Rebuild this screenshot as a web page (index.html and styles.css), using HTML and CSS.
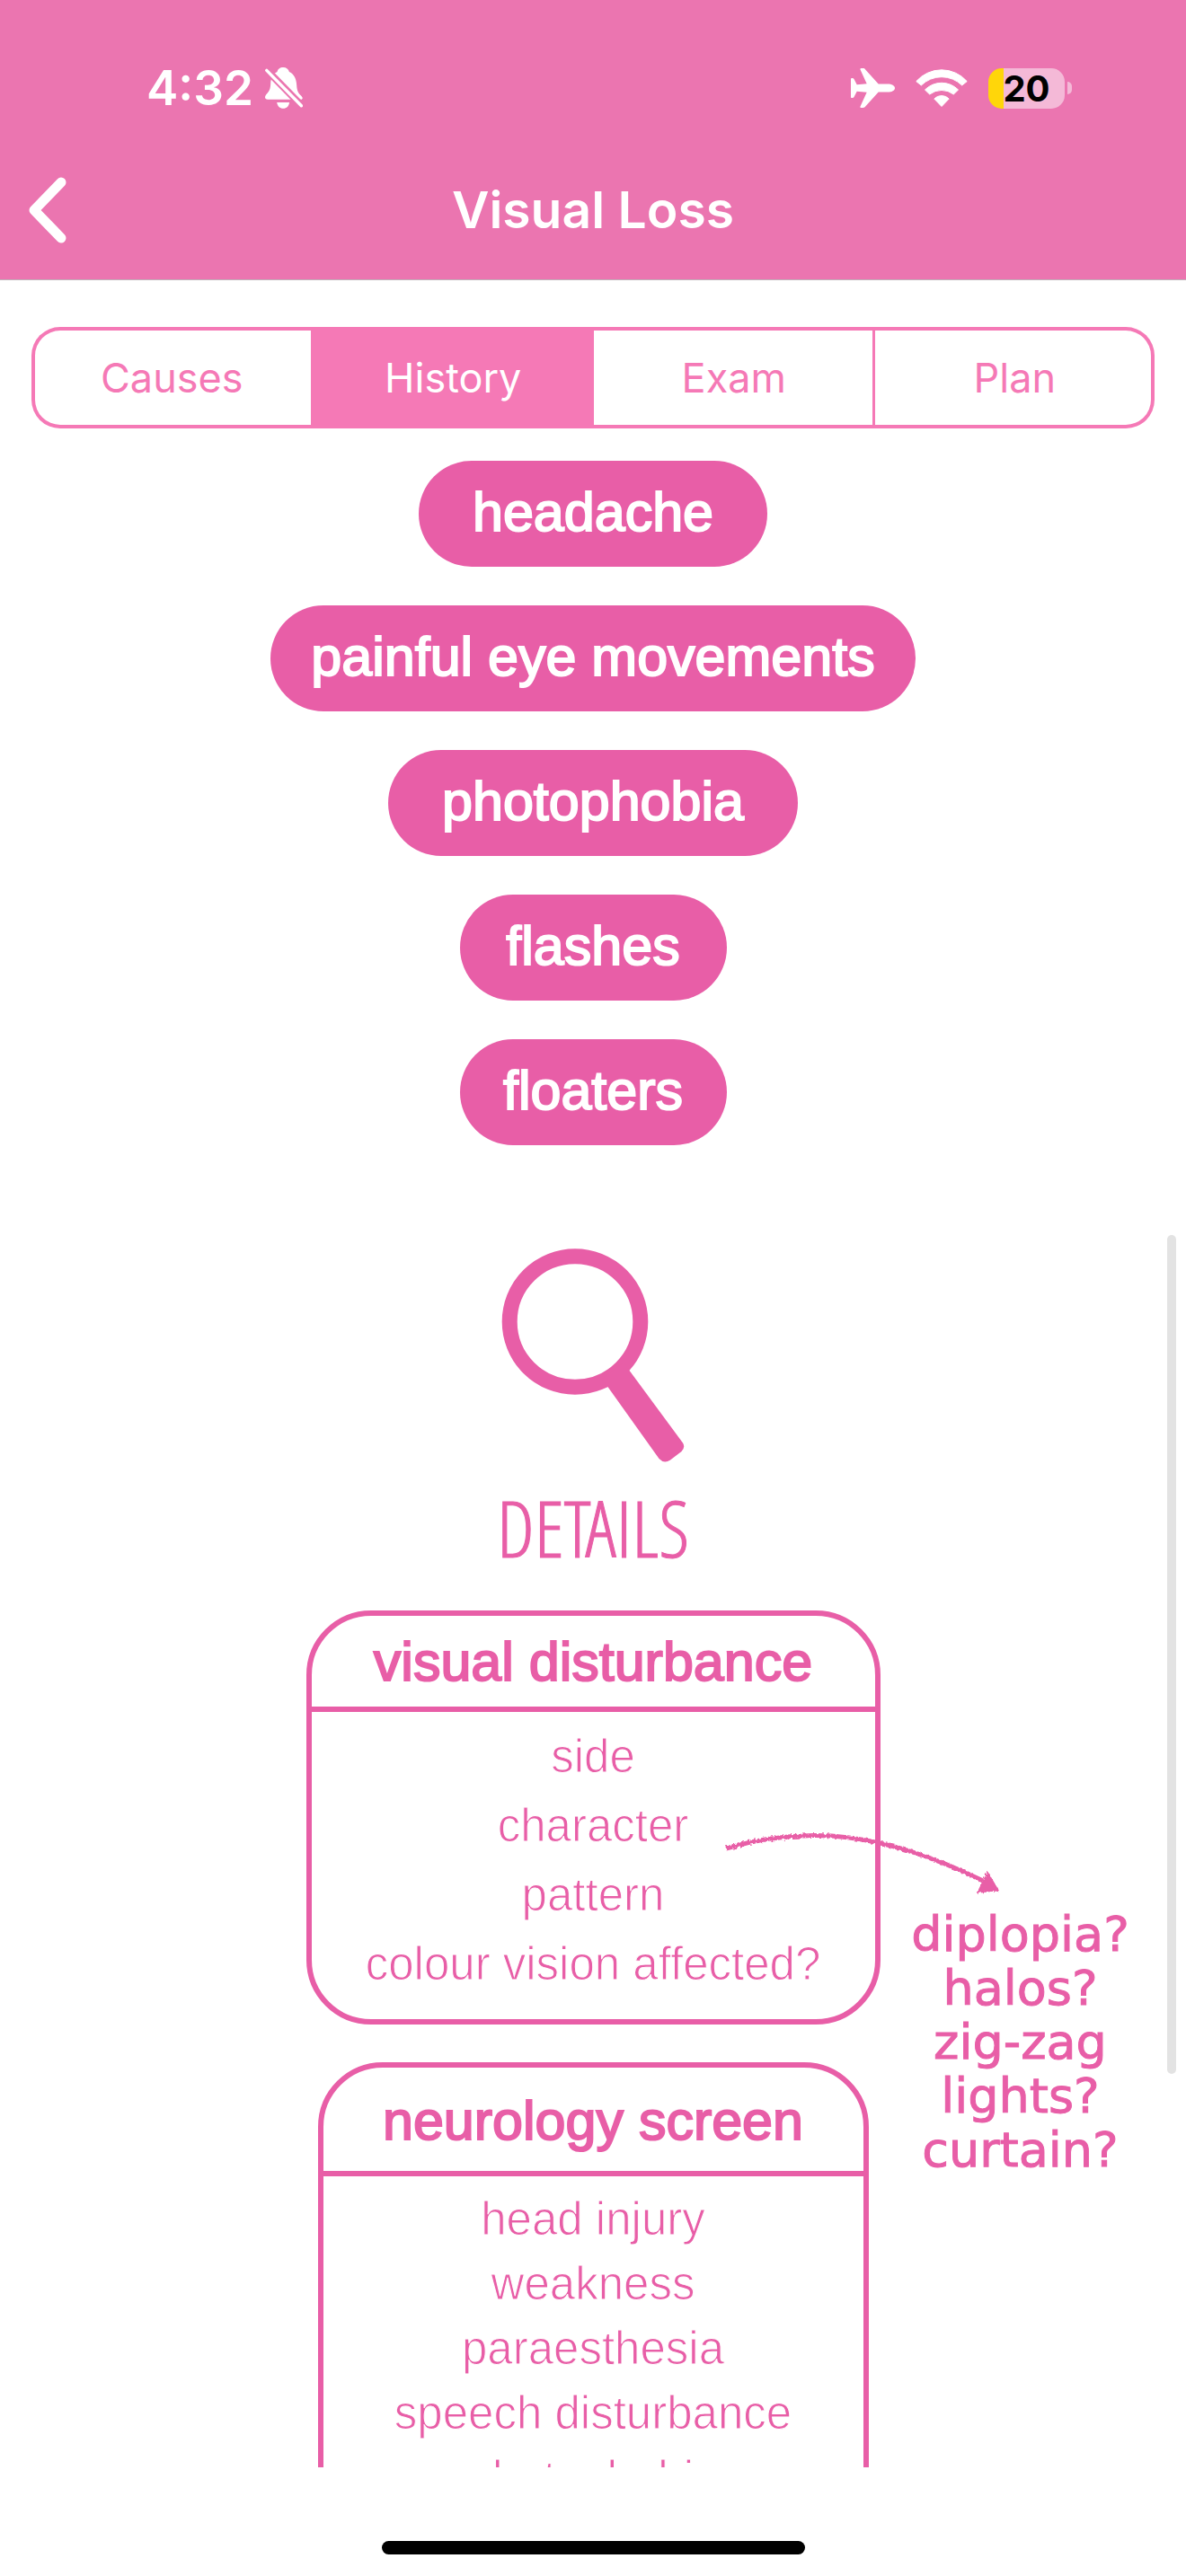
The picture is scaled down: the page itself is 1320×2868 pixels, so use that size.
FILE: index.html
```html
<!DOCTYPE html>
<html lang="en">
<head>
<meta charset="utf-8">
<meta name="viewport" content="width=device-width, initial-scale=1">
<title>Visual Loss</title>
<link rel="stylesheet" href="styles.css">
</head>
<body>
<div class="app">
  <header class="header">
    <div class="status">
      <div class="status-group">
        <span class="clock">4:32</span>
        <svg class="bell" viewBox="0 0 42 46" aria-hidden="true">
          <path fill="#fff" d="M20.2 0c3.6 0 6 2 6.7 5 5.8 2.600 8 8.500 8.300 15 .3 5.500 1.500 8 4 10.700 1.600 1.600 2.500 2.600 2.500 3.600 0 .9-.7 1.500-1.500 1.500H3c-2 0-3-.9-3-2.500 0-2 1.500-3.200 3-5 2.500-3 3-6 3.200-10 .3-6.800 2.300-11 7.300-13.300C14 2 16.600 0 20.200 0z"/>
          <path fill="#fff" d="M13.200 39h13.900c-.6 4-3 6.800-6.900 6.800s-6.400-2.800-7-6.800z"/>
          <path stroke="#eb75b0" stroke-width="8" d="M-2 -1L44 46"/>
          <path stroke="#fff" stroke-width="3.400" stroke-linecap="round" d="M1.800 3.400L40.400 42.800"/>
        </svg>
      </div>
      <div class="status-group icons">
        <svg class="plane" viewBox="0 0 49 44" aria-hidden="true">
          <path fill="#fff" d="M49 22c0 2.800-3.500 4.600-8 4.600H30.700L16.200 42.600c-.8 1-1.500 1.400-2.500 1.400h-2.200c-1 0-1.300-.8-1-1.600l7.200-15.700-11-.9-3.200 6.200c-.4.7-1 1-1.600 1H.9c-.5 0-.9-.4-.9-1V12c0-.6.4-1 .9-1h1c.6 0 1.200.3 1.600 1l3.200 6.200 11-.9L10.500 1.600c-.3-.8 0-1.600 1-1.600h2.200c1 0 1.700.4 2.500 1.400l14.500 16H41c4.500 0 8 1.800 8 4.600z"/>
        </svg>
        <svg class="wifi" viewBox="0 0 58 42" aria-hidden="true">
          <path fill="#fff" stroke="#fff" stroke-linejoin="round" d="M.8 13.600A37.500 37.500 0 0 1 57.200 13.600L51.700 18A32.300 32.300 0 0 0 6.300 18zM10.500 23A26 26 0 0 1 47.500 23L42.300 28A21.800 21.800 0 0 0 15.700 28zM20.800 33A11.500 11.500 0 0 1 37.200 33L29 41.500z"/>
        </svg>
        <div class="battery"><span class="battery-body">20</span><span class="battery-cap"></span></div>
      </div>
    </div>
    <nav class="navbar">
      <button class="back" type="button" aria-label="Back">
        <svg viewBox="0 0 44 74" aria-hidden="true"><path fill="none" stroke="#fff" stroke-width="11" stroke-linecap="round" stroke-linejoin="round" d="M37 6L7 37L37 68"/></svg>
      </button>
      <h1 class="title">Visual Loss</h1>
    </nav>
  </header>

  <div class="tabs" role="tablist">
    <button class="tab" type="button" role="tab" aria-selected="false">Causes</button>
    <button class="tab tab-active" type="button" role="tab" aria-selected="true">History</button>
    <button class="tab" type="button" role="tab" aria-selected="false">Exam</button>
    <button class="tab" type="button" role="tab" aria-selected="false">Plan</button>
  </div>

  <main class="content">
    <ul class="pills">
      <li class="pill">headache</li>
      <li class="pill pill-snug">painful eye movements</li>
      <li class="pill">photophobia</li>
      <li class="pill pill-snug">flashes</li>
      <li class="pill pill-snug">floaters</li>
    </ul>

    <section class="details">
      <svg class="lens" viewBox="0 0 204 240" aria-hidden="true">
        <circle cx="82" cy="82.500" r="72.800" fill="none" stroke="#e85ea7" stroke-width="17"/>
        <path fill="#e85ea7" d="M112 146L136 128L202 217.500Q205 222.500 200.500 227L188 236.500Q181 241 175.500 235z"/>
      </svg>
      <h2 class="details-title">DETAILS</h2>

      <div class="annotated">
        <article class="card">
          <h3 class="card-title">visual disturbance</h3>
          <ul class="card-list">
            <li>side</li>
            <li>character</li>
            <li>pattern</li>
            <li>colour vision affected?</li>
          </ul>
        </article>
        <svg class="arrow" viewBox="0 0 320 80" aria-hidden="true">
          <filter id="chalk" x="-5%" y="-20%" width="110%" height="140%">
            <feTurbulence type="fractalNoise" baseFrequency="0.35" numOctaves="2" seed="4" result="grain"/>
            <feDisplacementMap in="SourceGraphic" in2="grain" scale="5"/>
          </filter>
          <g filter="url(#chalk)">
            <path fill="none" stroke="#e85ea7" stroke-width="5" d="M7 23C100 -4 185 6 293 59"/>
            <path fill="#e85ea7" d="M298 48L311 70L286 73z"/>
          </g>
        </svg>
        <aside class="note">
          <span>diplopia?</span>
          <span>halos?</span>
          <span>zig-zag</span>
          <span>lights?</span>
          <span>curtain?</span>
        </aside>
      </div>

      <article class="card card-compact">
        <h3 class="card-title">neurology screen</h3>
        <ul class="card-list">
          <li>head injury</li>
          <li>weakness</li>
          <li>paraesthesia</li>
          <li>speech disturbance</li>
          <li>photophobia</li>
        </ul>
      </article>
    </section>
  </main>

  <footer class="footer"><span class="home-bar"></span></footer>
  <span class="scroll-thumb"></span>
</div>
</body>
</html>
```

FILE: styles.css
```css
:root {
  --header: #eb75b0;
  --tab: #f579b6;
  --pink: #e85ea7;
  --ui: "Inter", sans-serif;
  --text: "Liberation Sans", Arial, sans-serif;
}

* {
  box-sizing: border-box;
  margin: 0;
  padding: 0;
}

body {
  background: #fff;
  font-family: var(--text);
  color: var(--pink);
}

ul {
  list-style: none;
}

button {
  border: 0;
  background: none;
  font: inherit;
  color: inherit;
}

svg {
  display: block;
}

.app {
  position: relative;
  display: flex;
  flex-direction: column;
  height: 100vh;
}

/* Header */

.header {
  flex: none;
  background: var(--header);
  border-bottom: 1px solid #bdb4b9;
  color: #fff;
  font-family: var(--ui);
}

.status {
  display: flex;
  justify-content: space-between;
  align-items: center;
  height: 156px;
  padding: 40px 127px 0 163px;
}

.status-group {
  display: flex;
  align-items: center;
  gap: 13px;
}

.icons {
  gap: 23px;
}

.clock {
  font-size: 53px;
  font-weight: 600;
  line-height: 64px;
}

.bell {
  width: 42px;
  height: 46px;
}

.plane {
  width: 49px;
  height: 44px;
}

.wifi {
  width: 58px;
  height: 42px;
}

.battery {
  display: flex;
  align-items: center;
  gap: 3px;
}

.battery-body {
  width: 85px;
  height: 45px;
  border-radius: 15px;
  background: linear-gradient(to right, #ffd60a 17px, #f4b9d7 17px);
  color: #000;
  font-size: 40px;
  font-weight: 700;
  line-height: 45px;
  text-align: center;
}

.battery-cap {
  width: 5px;
  height: 14px;
  border-radius: 0 5px 5px 0;
  background: #f4b9d7;
}

.navbar {
  display: grid;
  grid-template-columns: 1fr auto 1fr;
  align-items: center;
  height: 155px;
  padding: 0 31px;
}

.back {
  justify-self: start;
}

.back svg {
  width: 44px;
  height: 74px;
}

.title {
  font-size: 57px;
  font-weight: 600;
  line-height: 72px;
}

/* Segmented control */

.tabs {
  flex: none;
  display: grid;
  grid-template-columns: repeat(4, 1fr);
  height: 113px;
  margin: 52px 35px 0;
  border-radius: 32px;
  box-shadow: inset 0 0 0 4px var(--tab);
  overflow: hidden;
}

.tab {
  color: var(--tab);
  font-family: var(--ui);
  font-size: 45px;
  font-weight: 400;
}

.tab + .tab {
  margin-left: -2px;
  border-left: 3px solid var(--tab);
}

.tab-active {
  background: var(--tab);
  color: #fff;
}

/* Scrolling content */

.content {
  flex: 1;
  min-height: 0;
  padding-top: 36px;
  overflow: hidden;
}

.pills {
  display: flex;
  flex-direction: column;
  align-items: center;
  gap: 43px;
}

.pill {
  height: 118px;
  padding: 0 60px;
  border-radius: 59px;
  background: var(--pink);
  color: #fff;
  font-size: 61px;
  line-height: 114px;
  text-align: center;
  -webkit-text-stroke: 2px currentColor;
}

.pill-snug {
  min-width: 297px;
  padding: 0 45px;
}

.details {
  display: flex;
  flex-direction: column;
  align-items: center;
  padding-top: 114px;
}

.lens {
  width: 204px;
  height: 240px;
}

.details-title {
  margin: 26px 0 46px;
  font-family: "Open Sans Condensed Light", "Open Sans Condensed", "Open Sans", sans-serif;
  font-size: 86px;
  font-weight: 300;
  line-height: 92px;
  -webkit-text-stroke: 1px currentColor;
}

.annotated {
  position: relative;
  margin-bottom: 42px;
}

.card {
  width: 639px;
  border: 6px solid var(--pink);
  border-radius: 72px;
  text-align: center;
}

.card-title {
  padding-top: 2px;
  border-bottom: 6px solid var(--pink);
  font-size: 61px;
  font-weight: 400;
  line-height: 99px;
  -webkit-text-stroke: 2px currentColor;
}

.card-list {
  padding: 11px 0 23px;
  font-size: 51px;
  line-height: 77px;
  -webkit-text-stroke: 1px #fff;
}

.card-compact {
  width: 613px;
}

.card-compact .card-title {
  padding-top: 4px;
  line-height: 111px;
}

.card-compact .card-list {
  padding-top: 12px;
  line-height: 72px;
}

.arrow {
  position: absolute;
  top: 242px;
  left: 460px;
  width: 320px;
  height: 80px;
}

.note {
  position: absolute;
  top: 331px;
  left: 665px;
  display: flex;
  flex-direction: column;
  align-items: center;
  width: 260px;
  font-family: Chalkduster, "DejaVu Sans", sans-serif;
  font-size: 54px;
  line-height: 60px;
  -webkit-text-stroke: 1px currentColor;
}

.footer {
  flex: none;
  display: flex;
  justify-content: center;
  align-items: flex-end;
  height: 121px;
  padding-bottom: 24px;
}

.home-bar {
  width: 471px;
  height: 15px;
  border-radius: 8px;
  background: #000;
}

.scroll-thumb {
  position: absolute;
  top: 1375px;
  right: 11px;
  width: 10px;
  height: 934px;
  border-radius: 5px;
  background: #e3e3e3;
}
```
